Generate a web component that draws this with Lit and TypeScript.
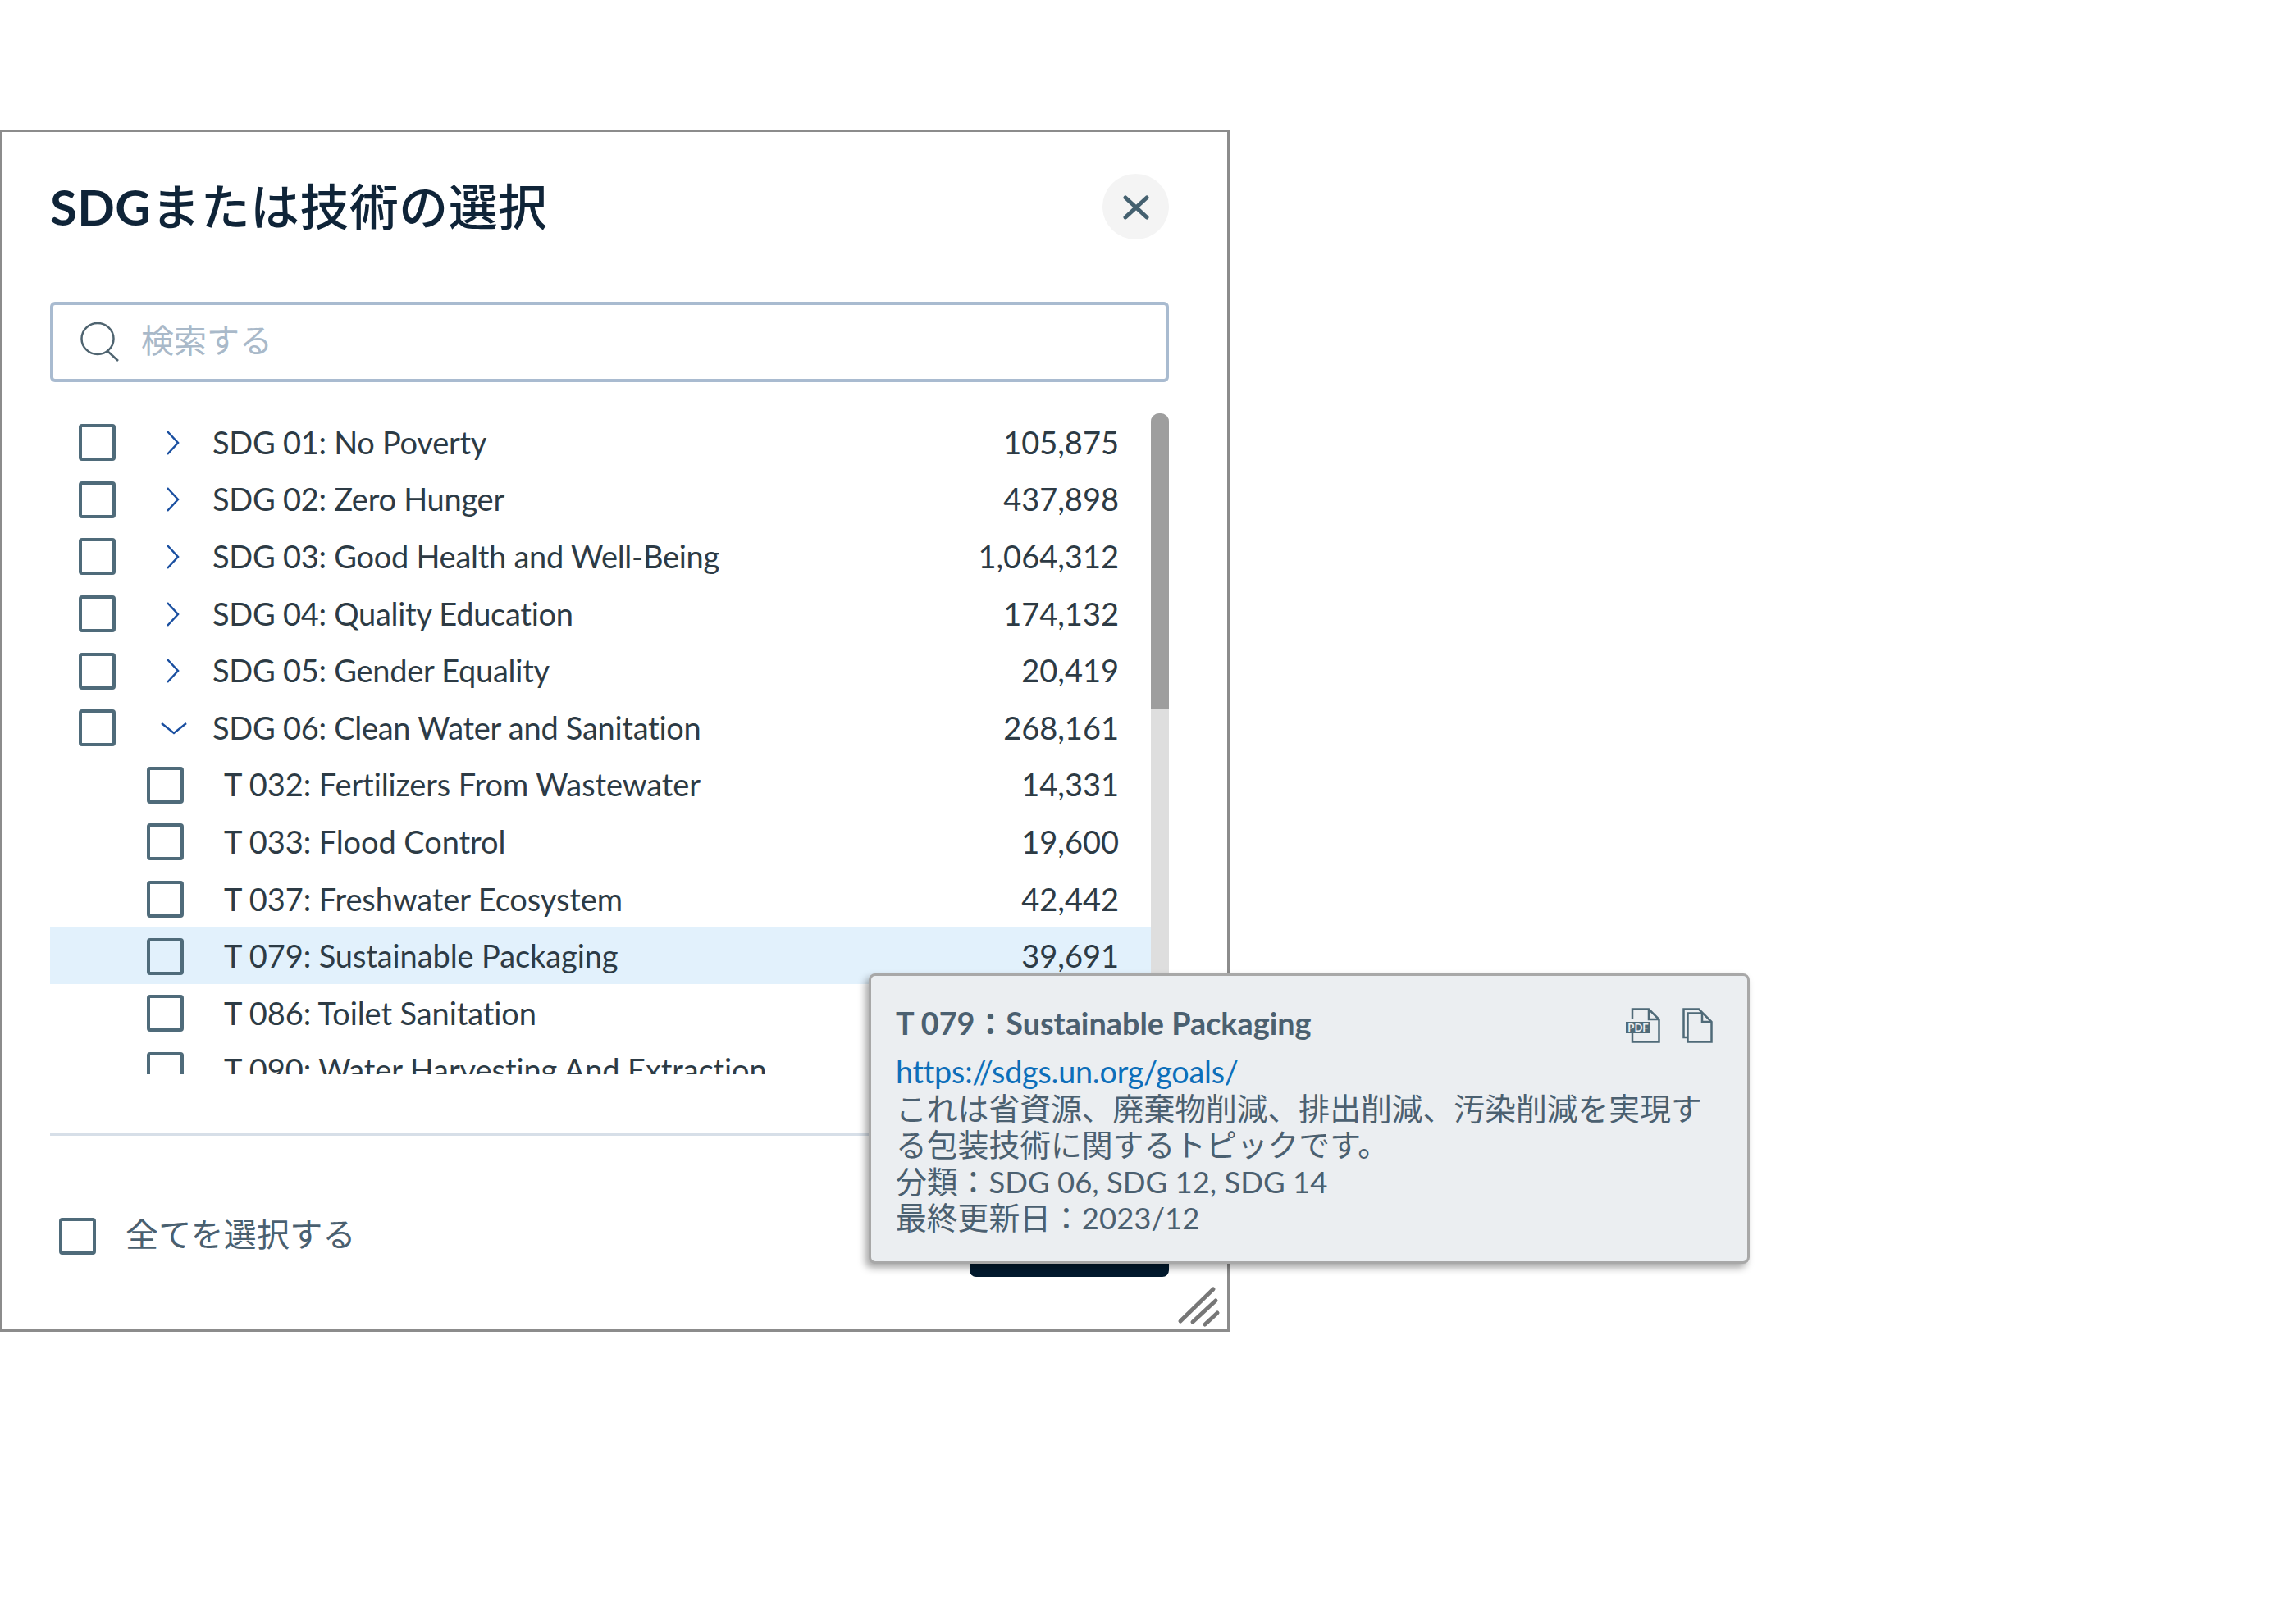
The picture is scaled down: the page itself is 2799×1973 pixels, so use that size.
import { LitElement, html, css } from "lit";
import { customElement } from "lit/decorators.js";

const ROWS: [string, string, "parent" | "open" | "child", boolean?][] = [
  ["SDG 01: No Poverty", "105,875", "parent"],
  ["SDG 02: Zero Hunger", "437,898", "parent"],
  ["SDG 03: Good Health and Well-Being", "1,064,312", "parent"],
  ["SDG 04: Quality Education", "174,132", "parent"],
  ["SDG 05: Gender Equality", "20,419", "parent"],
  ["SDG 06: Clean Water and Sanitation", "268,161", "open"],
  ["T 032: Fertilizers From Wastewater", "14,331", "child"],
  ["T 033: Flood Control", "19,600", "child"],
  ["T 037: Freshwater Ecosystem", "42,442", "child"],
  ["T 079: Sustainable Packaging", "39,691", "child", true],
  ["T 086: Toilet Sanitation", "", "child"],
  ["T 090: Water Harvesting And Extraction", "", "child"],
];

@customElement("app-root")
export class AppRoot extends LitElement {
  static styles = css`
    :host {
      display: block;
      position: relative;
      width: 2799px;
      height: 1973px;
      background: #fff;
      font-family: Lato, "Noto Sans CJK JP", sans-serif;
      overflow: hidden;
    }
    * { box-sizing: border-box; }
    .modal {
      position: absolute;
      left: 0;
      top: 158px;
      width: 1499px;
      height: 1466px;
      background: #fff;
      border: 3px solid #8c8c8c;
      padding: 51px 71px 0 58px;
      display: flex;
      flex-direction: column;
    }
    .header {
      display: flex;
      align-items: center;
      justify-content: space-between;
      height: 80px;
      margin-bottom: 76px;
    }
    h1 {
      margin: 0;
      font-size: 60px;
      font-weight: 500;
      color: #0f2438;
      line-height: 80px;
      letter-spacing: 0.4px;
    }
    h1 b { font-weight: 700; }
    .close {
      width: 81px;
      height: 80px;
      border-radius: 50%;
      background: #f4f4f4;
      display: flex;
      align-items: center;
      justify-content: center;
      padding-top: 2px;
    }
    .search {
      height: 98px;
      border: 4px solid #a9bbd0;
      border-radius: 6px;
      display: flex;
      align-items: center;
      padding-left: 33px;
      gap: 26px;
      margin-bottom: 38px;
      flex: none;
    }
    .placeholder { font-size: 40px; color: #a9b9c9; line-height: 40px; margin-top: -4px; }
    .list {
      height: 806px;
      flex: none;
      display: flex;
      overflow: hidden;
    }
    .rows { flex: 1; min-width: 0; }
    .row {
      height: 69.6px;
      display: flex;
      align-items: center;
      font-size: 38px;
      color: #2d3b45;
      padding-right: 39px;
    }
    .row.hl { background: #e2f1fc; }
    .box {
      flex: none;
      width: 45px;
      height: 45px;
      border: 4px solid #4f6b7a;
      border-radius: 4px;
    }
    .row .box { margin: 2px 0 0 35px; }
    .row.child .box { margin-left: 118px; }
    .chev {
      flex: none;
      width: 118px;
      display: flex;
      align-items: center;
      padding-left: 61px;
      margin-top: 2px;
    }
    .row.child .label { margin-left: 49px; letter-spacing: -0.1px; }
    .label { flex: 1; white-space: nowrap; letter-spacing: -0.27px; }
    .track { width: 22px; flex: none; background: #dedede; border-radius: 10px 10px 0 0; }
    .thumb { height: 360px; background: #9e9e9e; border-radius: 10px 10px 0 0; }
    .divider { height: 3px; background: #d7dfe8; margin-top: 72px; flex: none; }
    .footer {
      display: flex;
      align-items: center;
      justify-content: space-between;
      padding: 72px 0 0 11px;
    }
    .all { display: flex; align-items: center; gap: 36px; color: #4a6070; }
    .all span:last-child { font-size: 40px; line-height: 40px; margin-top: -4px; letter-spacing: 0.2px; }
    .go { width: 243px; height: 100px; background: #021a2e; border-radius: 8px; }
    .grip { position: absolute; left: 1431px; top: 1402px; }
    .tip {
      position: absolute;
      left: 1059px;
      top: 1187px;
      width: 1074px;
      height: 354px;
      background: #ebeef1;
      border: 3px solid #a8a8a8;
      border-radius: 8px;
      box-shadow: -4px 5px 10px rgba(0, 0, 0, 0.35);
      padding: 28px 30px 0 30px;
      color: #4b6070;
      font-size: 37.8px;
      line-height: 44.6px;
    }
    .tip-head {
      display: flex;
      justify-content: space-between;
      align-items: center;
      height: 60px;
      margin-bottom: 7px;
    }
    .tip-title { font-weight: 700; }
    .icons { display: flex; gap: 27px; padding-right: 12px; margin-top: 4px; }
    .icons svg { display: block; }
    a { color: #0d6fba; text-decoration: none; display: block; letter-spacing: -0.27px; }
    .line { display: block; }
    .num { font-size: 36.5px; }
  `;

  render() {
    return html`
      <div class="modal">
        <div class="header">
          <h1><b>SDG</b>または技術の選択</h1>
          <div class="close">
            <svg width="32" height="30" viewBox="0 0 32 30"><path d="M3 3 L29 27 M29 3 L3 27" stroke="#44606f" stroke-width="5" stroke-linecap="round" fill="none"/></svg>
          </div>
        </div>
        <div class="search">
          <svg width="48" height="48" viewBox="0 0 48 48"><ellipse cx="21" cy="20" rx="19.5" ry="19" fill="none" stroke="#4f6470" stroke-width="2.5"/><path d="M33 35 L46 47" stroke="#4f6470" stroke-width="2.5" fill="none"/></svg>
          <span class="placeholder">検索する</span>
        </div>
        <div class="list">
          <div class="rows">
            ${ROWS.map(
              ([t, n, k, hl]) => html`
                <div class="row ${k} ${hl ? "hl" : ""}">
                  <span class="box"></span>
                  ${k === "child"
                    ? ""
                    : html`<span class="chev">
                        ${k === "parent"
                          ? html`<svg width="18" height="30" viewBox="0 0 18 30"><path d="M2 1 L15 15 L2 29" fill="none" stroke="#1a4fa0" stroke-width="2.5"/></svg>`
                          : html`<svg width="32" height="16" viewBox="0 0 32 16" style="margin-left:-6px"><path d="M1 2 L16 14 L31 2" fill="none" stroke="#1a4fa0" stroke-width="2.5"/></svg>`}
                      </span>`}
                  <span class="label">${t}</span>
                  <span>${n}</span>
                </div>
              `
            )}
          </div>
          <div class="track"><div class="thumb"></div></div>
        </div>
        <div class="divider"></div>
        <div class="footer">
          <div class="all"><span class="box"></span><span>全てを選択する</span></div>
          <div class="go"></div>
        </div>
        <svg class="grip" width="56" height="56" viewBox="0 0 56 56">
          <path d="M5 48 L45 9 M20 49 L48 23 M35 52 L50 38" stroke="#777" stroke-width="5" stroke-linecap="round" fill="none"/>
        </svg>
      </div>
      <div class="tip">
        <div class="tip-head">
          <span class="tip-title">T 079：Sustainable Packaging</span>
          <span class="icons">
            <svg width="42" height="43" viewBox="0 0 42 43">
              <path d="M8 14 V1.5 H28 L40.5 14 V41.5 H8 V30" fill="none" stroke="#4f6a78" stroke-width="2.5"/>
              <path d="M28 1.5 V14 H40.5" fill="none" stroke="#4f6a78" stroke-width="2.5"/>
              <rect x="0" y="17" width="30" height="14" fill="#4f6a78"/>
              <text x="15" y="28.5" font-size="13" font-weight="700" fill="#ebeef1" text-anchor="middle" font-family="Lato, sans-serif">PDF</text>
            </svg>
            <svg width="37" height="43" viewBox="0 0 37 43">
              <path d="M6 36 H1.5 V1.5 H20 L35.5 17 V41.5 H6.5 V6.5 H24" fill="none" stroke="#4f6a78" stroke-width="2.5"/>
              <path d="M24 6.5 V17 H35.5" fill="none" stroke="#4f6a78" stroke-width="2.5"/>
            </svg>
          </span>
        </div>
        <a>https://sdgs.un.org/goals/</a>
        <span class="line">これは省資源、廃棄物削減、排出削減、汚染削減を実現する包装技術に関するトピックです。</span>
        <span class="line">分類：<span class="num">SDG 06, SDG 12, SDG 14</span></span>
        <span class="line">最終更新日：<span class="num">2023/12</span></span>
      </div>
    `;
  }
}
